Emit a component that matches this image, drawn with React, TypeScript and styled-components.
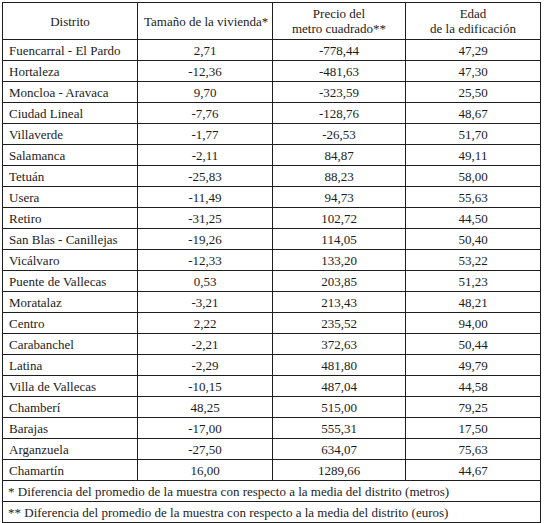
import React from "react";
import styled, { createGlobalStyle } from "styled-components";

const GlobalStyle = createGlobalStyle`
  html, body {
    margin: 0;
    padding: 0;
    background: #ffffff;
  }
  body {
    font-family: "Liberation Serif", "Times New Roman", serif;
    color: #1c1c1c;
  }
`;

const Table = styled.table`
  border-collapse: collapse;
  margin: 2px 0 0 2px;
  width: 538px;
  table-layout: fixed;
  font-family: "Liberation Serif", "Times New Roman", serif;
  font-size: 13px;
  color: #1c1c1c;

  td,
  th {
    border: 1px solid #1e1e1e;
    padding: 0 6px;
  }
`;

const HeadCell = styled.th`
  font-weight: 400;
  text-align: center;
  line-height: 15px;
  height: 36px;
  vertical-align: middle;
  white-space: nowrap;
`;

const Cell = styled.td<{ $align?: "left" | "center" }>`
  text-align: ${(p) => p.$align || "center"};
  height: 20px;
  line-height: 15px;
  vertical-align: middle;
  white-space: nowrap;
`;

const Note = styled.td`
  text-align: left;
  height: 20px;
  line-height: 15px;
  padding-left: 5px !important;
  white-space: nowrap;
`;

type Row = [string, string, string, string];

const rows: Row[] = [
  ["Fuencarral - El Pardo", "2,71", "-778,44", "47,29"],
  ["Hortaleza", "-12,36", "-481,63", "47,30"],
  ["Moncloa - Aravaca", "9,70", "-323,59", "25,50"],
  ["Ciudad Lineal", "-7,76", "-128,76", "48,67"],
  ["Villaverde", "-1,77", "-26,53", "51,70"],
  ["Salamanca", "-2,11", "84,87", "49,11"],
  ["Tetuán", "-25,83", "88,23", "58,00"],
  ["Usera", "-11,49", "94,73", "55,63"],
  ["Retiro", "-31,25", "102,72", "44,50"],
  ["San Blas - Canillejas", "-19,26", "114,05", "50,40"],
  ["Vicálvaro", "-12,33", "133,20", "53,22"],
  ["Puente de Vallecas", "0,53", "203,85", "51,23"],
  ["Moratalaz", "-3,21", "213,43", "48,21"],
  ["Centro", "2,22", "235,52", "94,00"],
  ["Carabanchel", "-2,21", "372,63", "50,44"],
  ["Latina", "-2,29", "481,80", "49,79"],
  ["Villa de Vallecas", "-10,15", "487,04", "44,58"],
  ["Chamberí", "48,25", "515,00", "79,25"],
  ["Barajas", "-17,00", "555,31", "17,50"],
  ["Arganzuela", "-27,50", "634,07", "75,63"],
  ["Chamartín", "16,00", "1289,66", "44,67"],
];

const notes = [
  "* Diferencia del promedio de la muestra con respecto a la media del distrito (metros)",
  "** Diferencia del promedio de la muestra con respecto a la media del distrito (euros)",
];

export default function App() {
  return (
    <>
      <GlobalStyle />
      <Table>
        <colgroup>
          <col style={{ width: 135 }} />
          <col style={{ width: 135 }} />
          <col style={{ width: 133 }} />
          <col style={{ width: 135 }} />
        </colgroup>
        <thead>
          <tr>
            <HeadCell>Distrito</HeadCell>
            <HeadCell>Tamaño de la vivienda*</HeadCell>
            <HeadCell>
              Precio del
              <br />
              metro cuadrado**
            </HeadCell>
            <HeadCell>
              Edad
              <br />
              de la edificación
            </HeadCell>
          </tr>
        </thead>
        <tbody>
          {rows.map((r) => (
            <tr key={r[0]}>
              <Cell $align="left">{r[0]}</Cell>
              <Cell>{r[1]}</Cell>
              <Cell>{r[2]}</Cell>
              <Cell>{r[3]}</Cell>
            </tr>
          ))}
          {notes.map((n) => (
            <tr key={n}>
              <Note colSpan={4}>{n}</Note>
            </tr>
          ))}
        </tbody>
      </Table>
    </>
  );
}
